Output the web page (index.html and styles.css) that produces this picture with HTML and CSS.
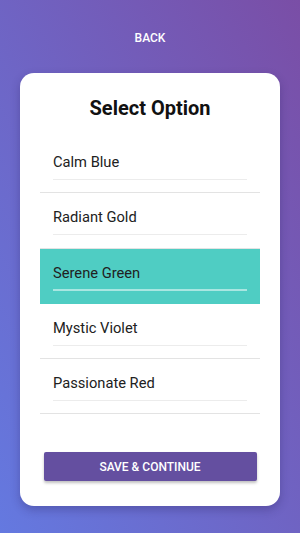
FILE: index.html
```html
<!DOCTYPE html>
<html lang="en">

<head>
    <meta charset="UTF-8">
    <meta name="viewport" content="width=device-width, initial-scale=1.0">
    <title>Select Option</title>
    <link rel="stylesheet" href="styles.css">
</head>

<body>
    <div class="screen">
        <button class="back-btn">Back</button>

        <div class="card">
            <h1 class="card-title">Select Option</h1>

            <ul class="option-list">
                <li class="option"><div class="option-field">Calm Blue</div></li>
                <li class="option"><div class="option-field">Radiant Gold</div></li>
                <li class="option selected"><div class="option-field">Serene Green</div></li>
                <li class="option"><div class="option-field">Mystic Violet</div></li>
                <li class="option"><div class="option-field">Passionate Red</div></li>
            </ul>

            <button class="save-btn">Save &amp; Continue</button>
        </div>
    </div>
</body>

</html>
```

FILE: styles.css
```css
* {
    margin: 0;
    padding: 0;
    box-sizing: border-box;
}

html, body {
    height: 100%;
}

body {
    font-family: Roboto, "Noto Sans", sans-serif;
    background: linear-gradient(to top right, #6479e0, #7a4ea6);
    color: #212121;
}

.screen {
    display: flex;
    flex-direction: column;
    align-items: center;
    padding-top: 30px;
}

.back-btn {
    background: none;
    border: none;
    color: #fff;
    font-family: inherit;
    font-size: 12px;
    font-weight: 500;
    line-height: 16px;
    text-transform: uppercase;
    cursor: pointer;
}

.card {
    width: 260px;
    margin-top: 27px;
    background-color: #fff;
    border-radius: 14px;
    box-shadow: 0 4px 10px rgba(40, 30, 90, 0.3);
    padding: 23px 0 25px;
    display: flex;
    flex-direction: column;
    align-items: center;
}

.card-title {
    font-size: 20px;
    font-weight: 700;
    line-height: 24px;
    color: #111;
}

.option-list {
    list-style: none;
    width: 220px;
    margin-top: 18px;
}

.option {
    height: 55.25px;
    padding: 14px 13px 0;
    border-bottom: 1px solid #e3e3e3;
}

.option-field {
    font-size: 14.7px;
    line-height: 20px;
    padding-bottom: 7px;
    border-bottom: 1px solid #ececec;
}

.option.selected {
    background-color: #4fcdc3;
    border-bottom-color: #4fcdc3;
}

.option.selected .option-field {
    border-bottom: 2px solid #a9e6e1;
    padding-bottom: 6px;
}

.save-btn {
    width: 213px;
    height: 29px;
    margin-top: 38px;
    border: none;
    border-radius: 2px;
    background-color: #644fa0;
    color: #fff;
    font-family: inherit;
    font-size: 12px;
    font-weight: 500;
    text-transform: uppercase;
    box-shadow: 0 2px 3px rgba(0, 0, 0, 0.25);
    cursor: pointer;
}
```
